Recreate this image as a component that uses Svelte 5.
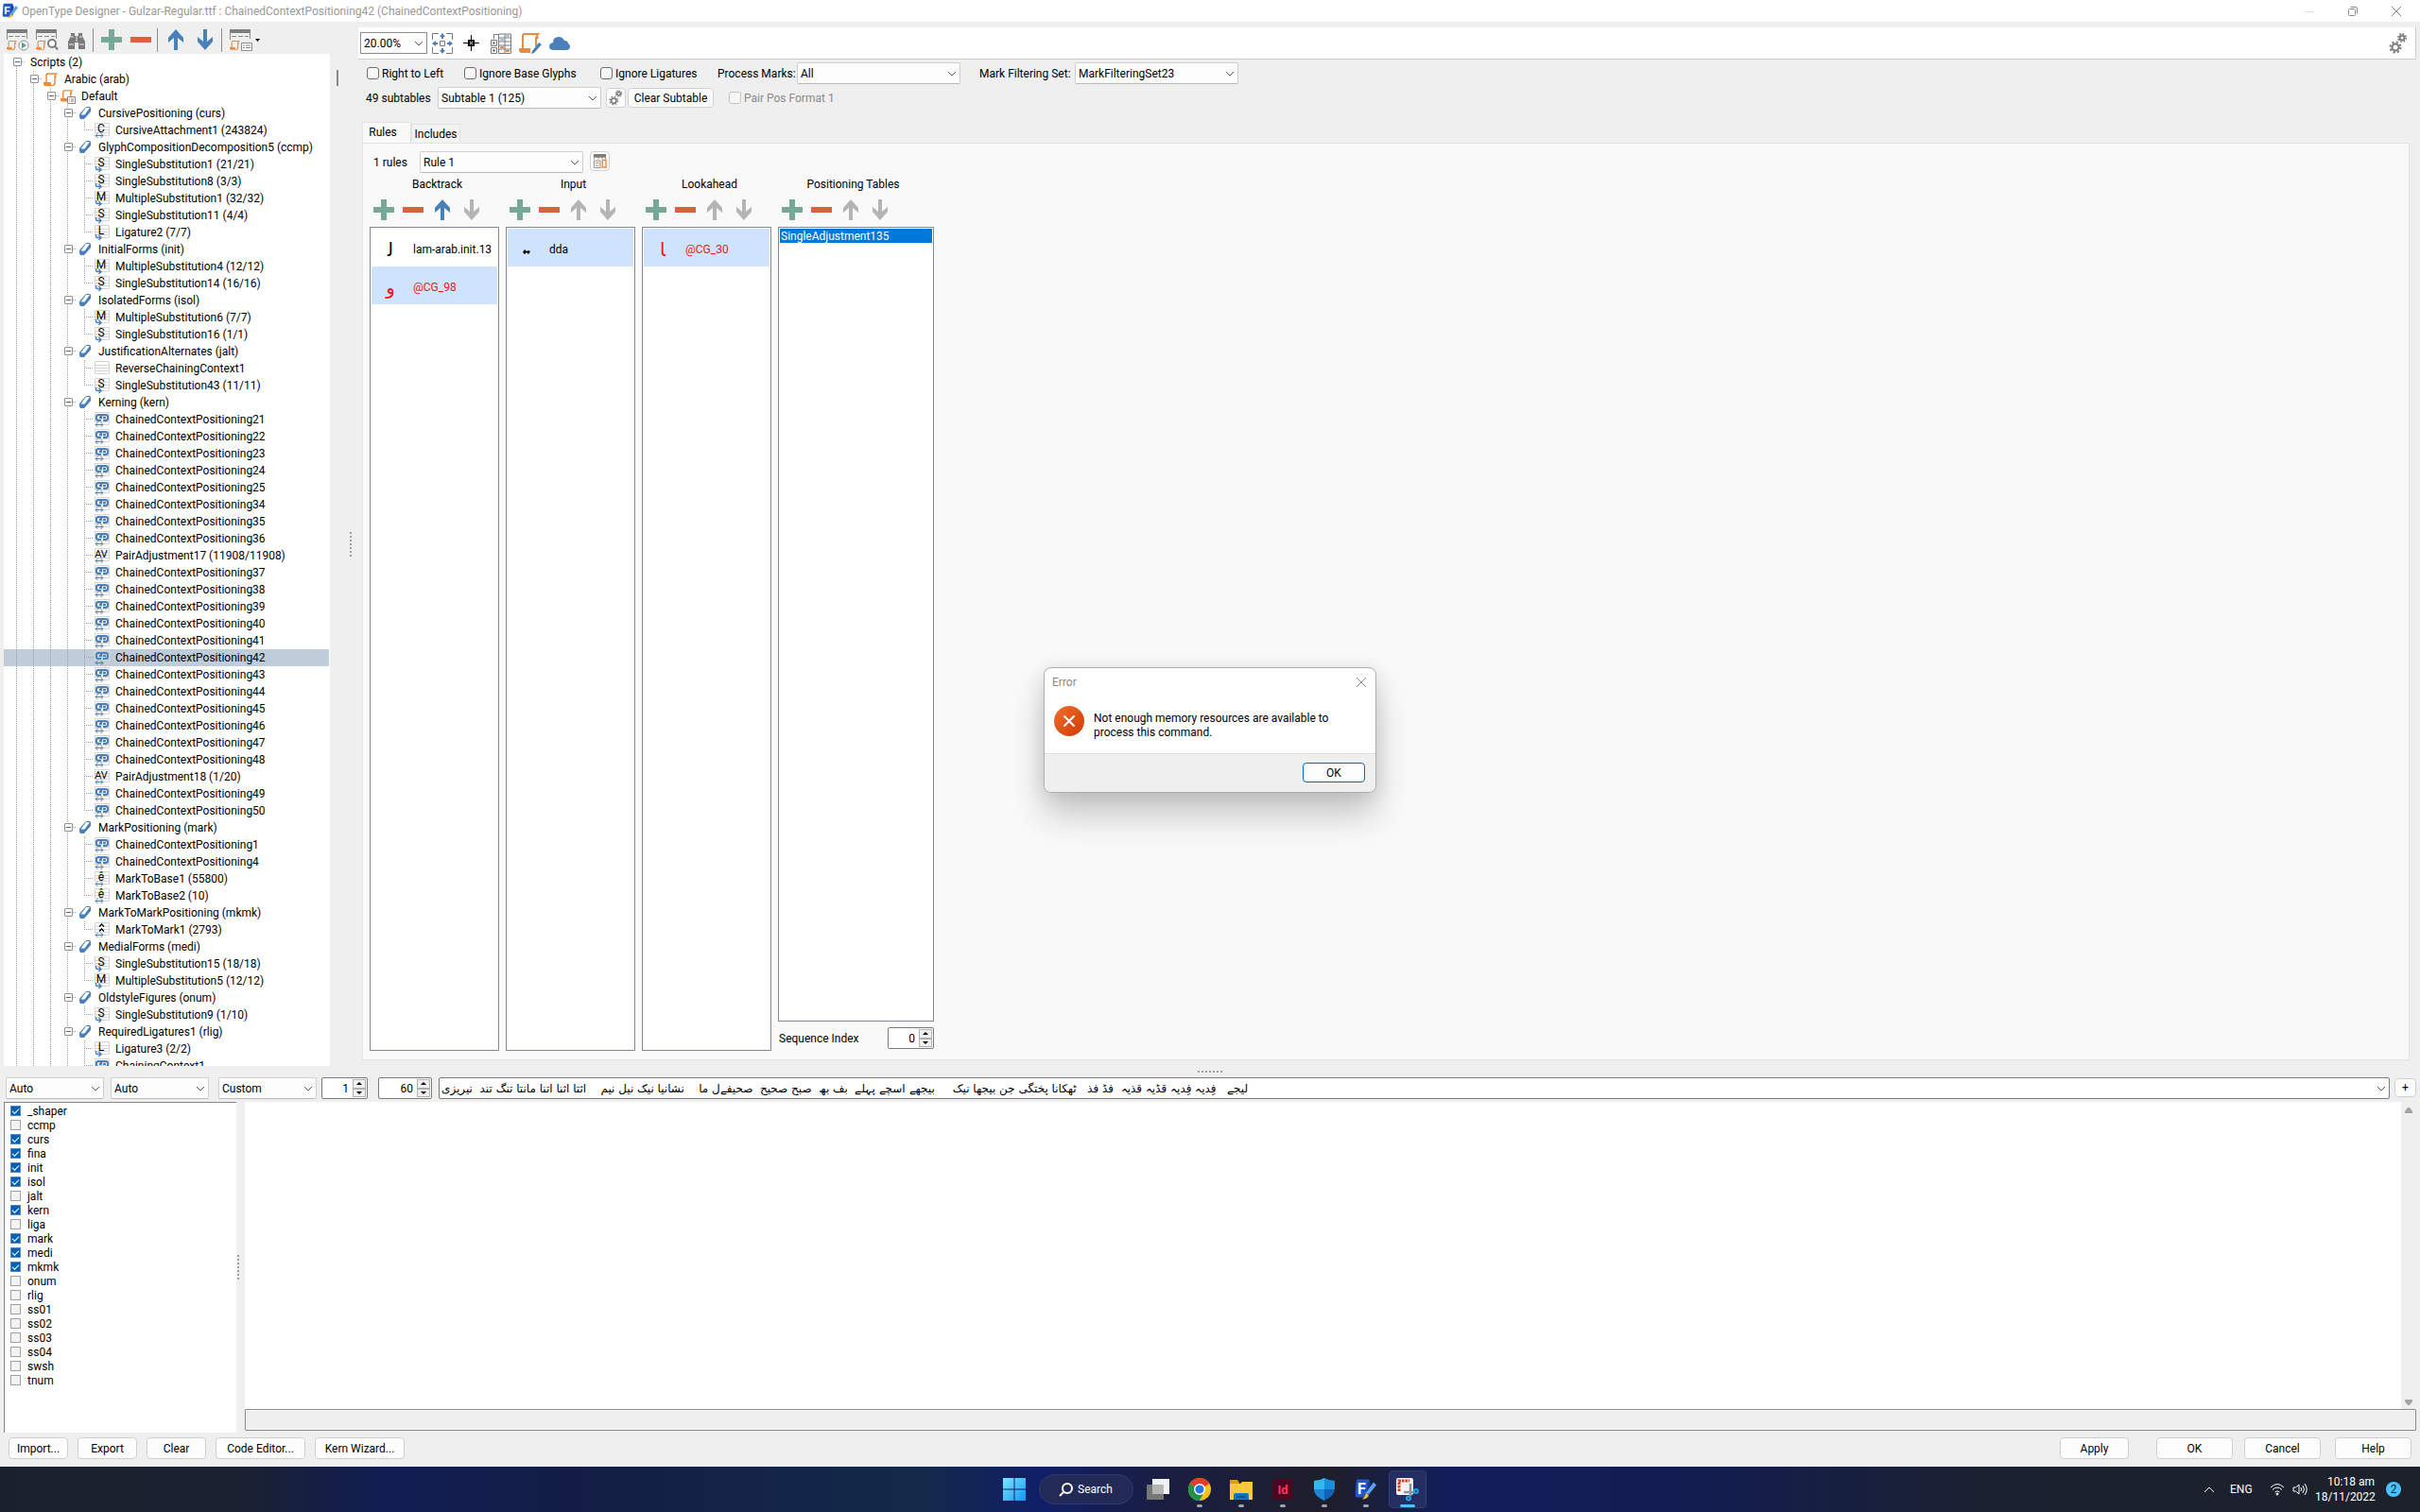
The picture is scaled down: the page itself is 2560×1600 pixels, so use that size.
<script>
	const kern = [21, 22, 23, 24, 25, 34, 35, 36];
	const kern2 = [37, 38, 39, 40, 41, 42, 43, 44, 45, 46, 47, 48];
	const chain = (n) => ["chain", `ChainedContextPositioning${n}`];

	const features = [
		["CursivePositioning (curs)", [["C", "CursiveAttachment1 (243824)", "pos"]]],
		[
			"GlyphCompositionDecomposition5 (ccmp)",
			[
				["S", "SingleSubstitution1 (21/21)"],
				["S", "SingleSubstitution8 (3/3)"],
				["M", "MultipleSubstitution1 (32/32)"],
				["S", "SingleSubstitution11 (4/4)"],
				["L", "Ligature2 (7/7)"],
			],
		],
		["InitialForms (init)", [["M", "MultipleSubstitution4 (12/12)"], ["S", "SingleSubstitution14 (16/16)"]]],
		["IsolatedForms (isol)", [["M", "MultipleSubstitution6 (7/7)"], ["S", "SingleSubstitution16 (1/1)"]]],
		["JustificationAlternates (jalt)", [["", "ReverseChainingContext1"], ["S", "SingleSubstitution43 (11/11)"]]],
		[
			"Kerning (kern)",
			[
				...kern.map(chain),
				["AV", "PairAdjustment17 (11908/11908)", "pos"],
				...kern2.map(chain),
				["AV", "PairAdjustment18 (1/20)", "pos"],
				chain(49),
				chain(50),
			],
		],
		[
			"MarkPositioning (mark)",
			[chain(1), chain(4), ["ê", "MarkToBase1 (55800)", "pos"], ["ê", "MarkToBase2 (10)", "pos"]],
		],
		["MarkToMarkPositioning (mkmk)", [["mark", "MarkToMark1 (2793)", "pos"]]],
		["MedialForms (medi)", [["S", "SingleSubstitution15 (18/18)"], ["M", "MultipleSubstitution5 (12/12)"]]],
		["OldstyleFigures (onum)", [["S", "SingleSubstitution9 (1/10)"]]],
		["RequiredLigatures1 (rlig)", [["L", "Ligature3 (2/2)"], ["chain", "ChainingContext1"]]],
	];

	// flatten to one list of rows
	const rows = [
		{ depth: 0, open: true, text: "Scripts (2)" },
		{ depth: 1, open: true, icon: "script", text: "Arabic (arab)" },
		{ depth: 2, open: true, icon: "lang", text: "Default" },
	];
	for (const [name, lookups] of features) {
		rows.push({ depth: 3, open: true, icon: "tag", text: name });
		lookups.forEach(([letter, text, kind], i) => {
			rows.push({
				depth: 4,
				icon: "lookup",
				letter,
				kind: letter == "chain" ? "pos" : kind,
				text,
				last: i == lookups.length - 1,
			});
		});
	}
	const selected = "ChainedContextPositioning42";

	const on = ["_shaper", "curs", "fina", "init", "isol", "kern", "mark", "medi", "mkmk"];
	const tags = "_shaper ccmp curs fina init isol jalt kern liga mark medi mkmk onum rlig ss01 ss02 ss03 ss04 swsh tnum".split(" ");

	const columns = [
		{ title: "Backtrack", up: true, items: [{ glyph: "ﻟ", name: "lam-arab.init.13" }, { glyph: "و", name: "@CG_98", group: true, sel: true }] },
		{ title: "Input", items: [{ dots: true, name: "dda", sel: true }] },
		{ title: "Lookahead", items: [{ glyph: "ﺎ", name: "@CG_30", group: true, sel: true }] },
		{ title: "Positioning Tables", tables: ["SingleAdjustment135"] },
	];

	const sample =
		"لیجے   فِدیہ فِدیہ قڈیہ قذیہ  فڈ فذ   ٹھکانا پختگی جن بیجھا نیک     بیجھے اسچے پہلے  بف بھ  صبح صحیح  صحیفےل ما    نشانیا نیک نیل نیم    اثتا اثنا اتنا مانتا تنگ تند  نیریزی";
</script>

{#snippet combo(label, value)}
	<span class="combo">
		<select aria-label={label}><option>{value}</option></select>
		<svg viewBox="0 0 10 6"><path d="M1 1l4 4 4-4" fill="none" stroke="#5c5c5c" /></svg>
	</span>
{/snippet}

{#snippet spinner(label, value)}
	<span class="spinner">
		<input type="number" aria-label={label} {value} />
		<span class="steps">
			<button aria-label="Increase"><svg viewBox="0 0 6 3"><path d="M0 3l3-3 3 3z" /></svg></button>
			<button aria-label="Decrease"><svg viewBox="0 0 6 3"><path d="M0 0l3 3 3-3z" /></svg></button>
		</span>
	</span>
{/snippet}

{#snippet plus()}
	<svg class="i22" viewBox="0 0 22 22"><path d="M8 0h6v8h8v6h-8v8H8v-8H0V8h8z" fill="#76a797" /></svg>
{/snippet}
{#snippet minus()}
	<svg class="i22" viewBox="0 0 22 22"><path d="M0 8h22v6H0z" fill="#d9623f" /></svg>
{/snippet}
{#snippet arrow(down, color)}
	<svg class="i22" class:down viewBox="0 0 22 22"><path d="M11 0l8 9v5l-6-5v13H9V9l-6 5V9z" fill={color} /></svg>
{/snippet}

{#snippet scroll()}
	<path d="M4 2h9.500q-2 2 0 4" fill="none" stroke="#e58c41" stroke-width="1.500" />
	<path d="M3 11V4q0-2 2-2M12 4v8q0 2-2 2" fill="none" stroke="#e58c41" stroke-width="1.500" />
	<path d="M0 11h8v3h3v1H2q-2 0-2-2z" fill="#e58c41" />
{/snippet}

{#snippet gears()}
	<g fill="none" stroke="#7a7a7a">
		<circle cx="7" cy="15" r="3.500" stroke-width="2" />
		<circle cx="7" cy="15" r="5.500" stroke-width="2" stroke-dasharray="2.200 2.120" />
		<circle cx="14" cy="5" r="2.500" stroke-width="2" />
		<circle cx="14" cy="5" r="4.300" stroke-width="1.500" stroke-dasharray="1.700 1.680" />
	</g>
{/snippet}

{#snippet tablePage()}
	<path d="M0 0h22v4H0z" fill="#7d7d7d" />
	<path d="M.5 4v7M21.500 4v6M2 7.500h5m2 0h5m2 0h4" stroke="#8a8a8a" fill="none" />
	<g transform="translate(0 11) scale(.72)">{@render scroll()}</g>
{/snippet}

{#snippet fontApp()}
	<rect x="1" y="1" width="14" height="19" rx="2" fill="#2358c9" transform="skewX(-4) translate(1 0)" />
	<path d="M14 3l3 2-2 14-3 1z" fill="#123d99" />
	<text x="3" y="16" font-size="16" font-weight="700" fill="#fff">F</text>
	<path d="M20 4l3 3-8 10-3-2z" fill="#5aa2ea" />
	<path d="M12 15l3 3q-2 4-7 4 3-2 4-7z" fill="#f0bd36" />
{/snippet}

<div class="screen">
	<header class="title">
		<svg class="app" viewBox="0 0 24 23">{@render fontApp()}</svg>
		<h1>OpenType Designer - Gulzar-Regular.ttf : ChainedContextPositioning42 (ChainedContextPositioning)</h1>
		<button class="win" aria-label="Minimize"><svg viewBox="0 0 10 10"><path d="M0 5.500h10" stroke="#ddd" /></svg></button>
		<button class="win" aria-label="Restore">
			<svg viewBox="0 0 10 10" fill="none" stroke="#888"><rect x=".5" y="2.500" width="7" height="7" rx="1" /><path d="M2.500.5H8q1.500 0 1.500 1.500v5.500" /></svg>
		</button>
		<button class="win" aria-label="Close"><svg viewBox="0 0 10 10"><path d="M0 0l10 10M10 0L0 10" stroke="#888" /></svg></button>
	</header>

	<div class="upper">
		<aside>
			<div class="tools">
				<button aria-label="Test lookup">
					<svg class="i24" viewBox="0 0 24 22">
						{@render tablePage()}
						<circle cx="18" cy="17" r="5" fill="#fff" stroke="#8a8a8a" /><path d="M16 13.500v7l5-3.500z" fill="#5f9c87" />
					</svg>
				</button>
				<button aria-label="Find lookup">
					<svg class="i24" viewBox="0 0 24 22">
						{@render tablePage()}
						<circle cx="17" cy="15" r="4" fill="#fff" stroke="#7d7d7d" stroke-width="2" /><path d="M20 18l3 3.500" stroke="#7d7d7d" stroke-width="2" />
					</svg>
				</button>
				<button class="binoc" aria-label="Find">
					<svg class="i22" viewBox="0 0 22 22" fill="#7a7a7a">
						<path d="M5 4h4v3h4V4h4v3l3 6v8h-7v-7h-4v7H2v-8l3-6z" />
						<path d="M3 16h5M14 16h5M5 8h3M14 8h3M11 7v6" stroke="#efefef" />
					</svg>
				</button>
				<i class="sep"></i>
				<button aria-label="Add">{@render plus()}</button>
				<button aria-label="Remove">{@render minus()}</button>
				<i class="sep"></i>
				<button aria-label="Move up">{@render arrow(false, "#4a80b8")}</button>
				<button aria-label="Move down">{@render arrow(true, "#4a80b8")}</button>
				<i class="sep"></i>
				<button class="more" aria-label="View">
					<svg class="i24" viewBox="0 0 24 22">
						{@render tablePage()}
						<path d="M12.500 14.500h11v8h-11z" fill="#fff" stroke="#8a8a8a" /><path d="M14 17h2m1 0h5M14 19.500h2m1 0h5" stroke="#8a8a8a" />
					</svg>
					<svg class="caret" viewBox="0 0 5 3"><path d="M0 0h5L2.500 3z" /></svg>
				</button>
			</div>
			<ul class="tree">
				{#each rows as row}
					<li class:selected={row.text == selected}>
						{#each { length: row.depth } as _}<i class="guide"></i>{/each}
						<i class="node" class:root={row.depth == 0} class:last={row.last}>
							{#if row.open}<b></b>{/if}
						</i>
						{#if row.icon == "script"}
							<svg class="icon" viewBox="0 0 16 16">{@render scroll()}</svg>
						{:else if row.icon == "lang"}
							<svg class="icon" viewBox="0 0 16 16">
								<g transform="scale(.9)">{@render scroll()}</g>
								<path d="M7.500 8.500h8v7h-8z" fill="#fff" stroke="#888" /><path d="M9 11h1m1 0h3M9 13h1m1 0h3" stroke="#777" />
							</svg>
						{:else if row.icon == "tag"}
							<svg class="icon" viewBox="0 0 16 16">
								<path d="M8 2q1-1 2-1h3l1 1v4L7 14H3l-1-2V9z" fill="#4a80b8" />
								<path d="M9 2h4L7.500 9.500H3.500z" fill="#fff" />
							</svg>
						{:else if row.icon == "lookup"}
							<svg class="icon lookup" viewBox="0 0 16 18">
								<path d="M.5 1.500h15v13H.5zM1 5.500h14M1 8.500h14M1 11.500h14" fill="none" stroke="#d4d4d4" />
								{#if row.letter == "chain"}
									<path d="M7 10H4q-2 0-2-2V6q0-2 2-2h3v3H5M9 10h3q2 0 2-2V6q0-2-2-2H8M9 7h3" fill="none" stroke="#4a80b8" stroke-width="2" />
								{:else if row.letter == "mark"}
									<path d="M5 5.500L7.500 3 10 5.500M5 10.500L7.500 8 10 10.500" fill="none" stroke="#000" stroke-width="1.300" />
								{:else}
									<text x="7" y="11" font-size={row.letter == "AV" ? 11 : 12} text-anchor="middle">{row.letter}</text>
								{/if}
								{#if row.kind == "pos"}
									<path d="M0 12h10v6H0z" fill="#fff" class="patch" />
									<path d="M1 14.500h8M3.500 12L1 14.500 3.500 17M6.500 12L9 14.500 6.500 17" fill="none" stroke="#4a80b8" />
								{:else if row.letter}
									<path d="M0 12h8v6H0z" fill="#fff" />
									<path d="M1.500 11v2q0 1.500 2 1.500h3M4.500 12L7 14.500 4.500 17" fill="none" stroke="#4a80b8" stroke-width="1.400" />
								{/if}
							</svg>
						{/if}
						<span>{row.text}</span>
					</li>
				{/each}
			</ul>
		</aside>
		<div class="vsplit"><i class="mark"></i><i class="grip"></i></div>

		<main>
			<div class="bar">
				<div class="zoom">{@render combo("Zoom", "20.00%")}</div>
				<button aria-label="Fit">
					<svg class="i22" viewBox="0 0 22 22" fill="none" stroke="#7a7a7a">
						<path d="M.5 7V.5H7M15 .5h6.500V7M21.500 15v6.500H15M7 21.500H.5V15M9 8.500h4.500v5H8.500v-5z" />
						<path d="M11 0l3 4h-2v2h-2V4H8zM11 22l3-4h-2v-2h-2v2H8zM0 11l4-3v2h2v2H4v2zM22 11l-4-3v2h-2v2h2v2z" fill="#4a80b8" stroke="none" />
					</svg>
				</button>
				<button aria-label="Center">
					<svg class="i22" viewBox="0 0 22 22"><path d="M10.500 2v17M2 10.500h17" stroke="#000" /><path d="M7 7h7v7H7z" /><path d="M9 9l3 3m0-3l-3 3" stroke="#fff" /></svg>
				</button>
				<button aria-label="Grid">
					<svg class="i22" viewBox="0 0 22 22" fill="none" stroke="#7a7a7a">
						<path d="M8.500 1h13v20.500h-13zM15 1v20M9 5h12M9 9h12M9 13h12M9 17h12M3 1.500h5M3.500 1v5M.5 7.500h6v6h-6zM.5 15.500h6v6h-6zM2 10.500h3M3.500 9v3M2 18.500h3M3.500 17v3" />
						<path d="M10 7h4M16 3h4" stroke="#4a80b8" /><path d="M10 15h4M16 19h4" stroke="#e58c41" stroke-width="2" />
					</svg>
				</button>
				<button aria-label="Script">
					<svg class="i24" viewBox="0 0 24 22">
						<path d="M4 16V3q0-2 2-2h14q-2 2 0 5M18 4v10" fill="none" stroke="#e58c41" stroke-width="2" /><path d="M0 16h12v5H3q-3 0-3-3z" fill="#e58c41" />
						<path d="M21 10l3 2-8 9-3 1 1-3z" fill="#4a80b8" />
					</svg>
				</button>
				<button aria-label="Cloud">
					<svg class="i22" viewBox="0 0 22 22"><path d="M5 18q-5 0-5-4 0-3 4-4 0-6 6-6 4 0 6 4 4 0 4 3 2 1 2 3 0 4-4 4z" fill="#4a80b8" /></svg>
				</button>
				<button class="settings" aria-label="Settings"><svg class="i22" viewBox="0 0 20 22">{@render gears()}</svg></button>
			</div>
			<div class="opts">
				<label class="check"><input type="checkbox" />Right to Left</label>
				<label class="check"><input type="checkbox" />Ignore Base Glyphs</label>
				<label class="check"><input type="checkbox" />Ignore Ligatures</label>
				<span>Process Marks:</span>
				<div class="wide">{@render combo("Process Marks", "All")}</div>
				<span>Mark Filtering Set:</span>
				<div class="wide">{@render combo("Mark Filtering Set", "MarkFilteringSet23")}</div>
			</div>
			<div class="sub">
				<span class="count">49 subtables</span>
				<div class="wide">{@render combo("Subtable", "Subtable 1 (125)")}</div>
				<button class="btn sq" aria-label="Subtable settings"><svg viewBox="0 0 20 22">{@render gears()}</svg></button>
				<button class="btn clear">Clear Subtable</button>
				<label class="check off"><input type="checkbox" disabled />Pair Pos Format 1</label>
			</div>
			<div class="tabs" role="tablist">
				<button role="tab" class="tab active" aria-selected="true">Rules</button>
				<button role="tab" class="tab" aria-selected="false">Includes</button>
			</div>
			<section class="panel">
				<div class="rule">
					<span class="rules">1 rules</span>
					<div class="wide">{@render combo("Rule", "Rule 1")}</div>
					<button class="btn sq" aria-label="Rule table">
						<svg viewBox="0 0 16 18"><path d="M1 1h14v4H1z" fill="#7d7d7d" /><path d="M1.500 8.500h7v8h-7zM3 11h4M3 14h4M1.500 5v2m5-2v2m4-2v2m4-2v2" fill="none" stroke="#8a8a8a" /><path d="M11 15V8h4v8h-5" fill="none" stroke="#e58c41" stroke-width="1.500" /></svg>
					</button>
				</div>
				<div class="cols">
					{#each columns as col}
						<div class="col" class:last={col.tables}>
							<h2>{col.title}</h2>
							<div class="acts">
								<button aria-label="Add to {col.title}">{@render plus()}</button>
								<button aria-label="Remove from {col.title}">{@render minus()}</button>
								<button aria-label="Move up">{@render arrow(false, col.up ? "#4a80b8" : "#b4b4b4")}</button>
								<button aria-label="Move down">{@render arrow(true, "#b4b4b4")}</button>
							</div>
							<ul class="list">
								{#if col.tables}
									{#each col.tables as t}<li class="table">{t}</li>{/each}
								{:else}
									{#each col.items as item}
										<li class="glyph" class:sel={item.sel} class:group={item.group}>
											<span class="pic">
												{#if item.dots}
													<svg viewBox="0 0 8 5"><path d="M2 0l2 2 2-1 2 1-2 3-2-2-2 2-2-2z" /></svg>
												{:else}{item.glyph}{/if}
											</span>
											{item.name}
										</li>
									{/each}
								{/if}
							</ul>
							{#if col.tables}
								<div class="seq"><span>Sequence Index</span><div class="n49">{@render spinner("Sequence Index", 0)}</div></div>
							{/if}
						</div>
					{/each}
				</div>
			</section>
		</main>
	</div>

	<div class="hsplit"><i class="grip"></i></div>

	<div class="preview">
		<div class="c104">{@render combo("Script", "Auto")}</div>
		<div class="c104 mid">{@render combo("Language", "Auto")}</div>
		<div class="c104">{@render combo("Direction", "Custom")}</div>
		<div class="n49">{@render spinner("Line", 1)}</div>
		<div class="n57">{@render spinner("Size", 60)}</div>
		<div class="sample">
			<input type="text" aria-label="Sample text" value={sample} />
			<svg viewBox="0 0 10 6"><path d="M1 1l4 4 4-4" fill="none" stroke="#5c5c5c" /></svg>
		</div>
		<button class="btn add">+</button>
	</div>

	<div class="lower">
		<div class="tags">
			{#each tags as tag}
				<label><input type="checkbox" checked={on.includes(tag)} />{tag}</label>
			{/each}
		</div>
		<div class="vsplit thin"><i class="grip"></i></div>
		<div class="canvas">
			<div class="paper">
				<div class="scrollbar">
					<svg viewBox="0 0 8 6"><path d="M3 0h2l3 4v2H0V4z" fill="#a3a3a3" /></svg>
					<svg viewBox="0 0 8 6"><path d="M0 0h8v2L5 6H3L0 2z" fill="#a3a3a3" /></svg>
				</div>
			</div>
			<div class="status"></div>
		</div>
	</div>

	<footer>
		<button class="btn w63">Import...</button>
		<button class="btn w63">Export</button>
		<button class="btn w63">Clear</button>
		<button class="btn w95">Code Editor...</button>
		<button class="btn w95">Kern Wizard...</button>
		<span class="fill"></span>
		<button class="btn w73">Apply</button>
		<button class="btn w81 ok">OK</button>
		<button class="btn w81">Cancel</button>
		<button class="btn w81 help">Help</button>
	</footer>

	<nav class="taskbar">
		<div class="apps">
			<button aria-label="Start">
				<svg class="i24" viewBox="0 0 24 24">
					<linearGradient id="win" x1="0" y1="0" x2="1" y2="1"><stop offset="0" stop-color="#7be8ff" /><stop offset="1" stop-color="#1494f5" /></linearGradient>
					<path d="M0 0h11.500v11.500H0zM12.500 0H24v11.500H12.500zM0 12.500h11.500V24H0zM12.500 12.500H24V24H12.500z" fill="url(#win)" />
				</svg>
			</button>
			<button class="search">
				<svg viewBox="0 0 14 14" fill="none" stroke="#fff" stroke-width="2"><circle cx="8" cy="6" r="5" /><path d="M4 10l-4 4" /></svg>Search
			</button>
			<button aria-label="Task view">
				<svg class="i24" viewBox="0 0 24 24"><path d="M6 1h18v16H6z" fill="#f2f2f2" /><path d="M0 7h18v16H0z" fill="#777" /><path d="M6 7h12v10H6z" fill="#b5b5b5" /></svg>
			</button>
			<button class="run" aria-label="Chrome">
				<svg class="i24" viewBox="0 0 24 24">
					<circle cx="12" cy="12" r="12" fill="#fbc116" />
					<path d="M12 12L1.600 6A12 12 0 0 1 22.400 6z" fill="#e33b2e" />
					<path d="M12 24A12 12 0 0 1 1.600 6L12 12l4 4z" fill="#229342" />
					<circle cx="12" cy="12" r="6" fill="#fff" /><circle cx="12" cy="12" r="4.600" fill="#2f76e5" />
				</svg>
			</button>
			<button class="run" aria-label="File Explorer">
				<svg class="i24" viewBox="0 0 24 24"><path d="M0 2h8l2 3v4H0z" fill="#e09a08" /><path d="M0 6h11l2-2h11v19H0z" fill="#fdc93c" /><path d="M4 18q0-2 2-2h12q2 0 2 2v5H4z" fill="#1474c4" /><path d="M7 19h10v2H7z" fill="#0a5298" /></svg>
			</button>
			<button class="run" aria-label="InDesign">
				<svg class="i24" viewBox="0 0 24 24"><rect x="1" y="1" width="22" height="22" rx="4" fill="#4b0620" /><text x="12" y="17" font-size="13" font-weight="700" text-anchor="middle" fill="#ff3568">Id</text></svg>
			</button>
			<button class="run" aria-label="Security">
				<svg class="i24" viewBox="0 0 24 24">
					<path d="M12 0q5 3 11 3v8q0 8-11 13Q1 19 1 11V3q6 0 11-3z" fill="#0f63b5" /><path d="M12 0v12H1V3q6 0 11-3z" fill="#36b6ee" /><path d="M12 0q5 3 11 3v9H12z" fill="#1590dd" /><path d="M12 12v12Q1 19 1 12z" fill="#1e86d6" />
				</svg>
			</button>
			<button class="run" aria-label="FontCreator"><svg class="i24" viewBox="0 0 24 23">{@render fontApp()}</svg></button>
			<button class="run current" aria-label="Snipping Tool">
				<svg class="i24" viewBox="0 0 24 24">
					<rect x="0" y="0" width="18" height="18" rx="2" fill="#f4f4f4" /><path d="M3 14V3h11" fill="none" stroke="#d83b17" stroke-width="3" stroke-dasharray="2.500 1" />
					<path d="M15 6v13M8 15h12" stroke="#8d9499" stroke-width="2.500" /><circle cx="21" cy="14" r="2" fill="none" stroke="#1ca0e8" stroke-width="2" /><circle cx="13" cy="21.500" r="2" fill="none" stroke="#1ca0e8" stroke-width="2" />
				</svg>
			</button>
		</div>
		<div class="tray">
			<svg class="up" viewBox="0 0 12 8"><path d="M1 7l5-5 5 5" /></svg>
			<span class="lang">ENG</span>
			<svg class="net" viewBox="0 0 16 14"><path d="M1 5q7-7 14 0M3 7.500q5-5 10 0M5.500 10q2.500-2.500 5 0" /><circle cx="8" cy="12" r="1" fill="#fff" /></svg>
			<svg class="vol" viewBox="0 0 16 14"><path d="M1 5h2.500L7 2v10L3.500 9H1zM9 5q1.500 2 0 4M11 3q3 4 0 8M13 1q4.500 6 0 12" /></svg>
			<time>10:18 am<br />18/11/2022</time>
			<span class="badge">2</span>
		</div>
	</nav>

	<div class="dialog" role="alertdialog" aria-labelledby="err">
		<div class="dtitle">
			<span id="err">Error</span>
			<button aria-label="Close"><svg viewBox="0 0 10 10"><path d="M0 0l10 10M10 0L0 10" stroke="#888" /></svg></button>
		</div>
		<div class="dbody">
			<svg viewBox="0 0 32 32">
				<linearGradient id="red" x1="0" y1="0" x2="1" y2="1"><stop offset="0" stop-color="#f1702c" /><stop offset="1" stop-color="#cf3a05" /></linearGradient>
				<circle cx="16" cy="16" r="16" fill="url(#red)" /><path d="M11 11l10 10M21 11L11 21" stroke="#fff" stroke-width="2" stroke-linecap="round" />
			</svg>
			<p>Not enough memory resources are available to process this command.</p>
		</div>
		<div class="dfoot"><button class="btn">OK</button></div>
	</div>
</div>

<style>
	:global(body) {
		background: #efefef;
	}

	.screen {
		position: relative;
		display: flex;
		flex-direction: column;
		height: 100vh;
		overflow: hidden;
		background: #efefef;
		color: #000;
		font: 12px/16px Roboto, "Noto Sans", "DejaVu Sans", sans-serif;
	}

	.screen * {
		box-sizing: border-box;
	}

	svg {
		display: block;
		flex: none;
		overflow: visible;
	}

	button,
	select,
	input {
		font: inherit;
		color: inherit;
		margin: 0;
	}

	button {
		display: flex;
		align-items: center;
		justify-content: center;
		padding: 0;
		border: 0;
		background: none;
	}

	ul {
		margin: 0;
		padding: 0;
		list-style: none;
	}

	.i22 {
		width: 22px;
		height: 22px;
	}

	.i24 {
		width: 24px;
		height: 24px;
	}

	.down {
		transform: rotate(180deg);
	}

	/* title bar */
	.title {
		display: flex;
		flex: none;
		align-items: center;
		height: 23px;
		padding-right: 2px;
		background: #fff;
	}

	.app {
		width: 18px;
		height: 17px;
		margin: 0 3px 0 2px;
	}

	h1 {
		flex: 1;
		margin: 0;
		font-size: 12px;
		font-weight: 400;
		color: #999;
	}

	.win {
		width: 46px;
		height: 20px;
	}

	.win svg {
		width: 10px;
		height: 10px;
	}

	/* upper half */
	.upper {
		display: flex;
		flex: 1;
		min-height: 0;
	}

	aside {
		display: flex;
		flex-direction: column;
		width: 349px;
		padding-left: 4px;
	}

	.tools {
		display: flex;
		flex: none;
		align-items: center;
		height: 34px;
		margin-left: -1px;
		padding-top: 4px;
	}

	.tools button {
		width: 31px;
	}

	.tools .i24 {
		height: 22px;
	}

	.tools .more {
		width: 42px;
		gap: 3px;
	}

	.caret {
		width: 5px;
		height: 3px;
	}

	.sep {
		width: 1px;
		height: 25px;
		margin: 0 3px 0 2px;
		background: #8c8c8c;
	}

	.tree {
		flex: 1;
		min-height: 0;
		overflow: hidden;
		background: #fff;
	}

	.tree li {
		display: flex;
		height: 18px;
		margin-right: 1px;
		padding-left: 4px;
		line-height: 18px;
		white-space: nowrap;
	}

	.tree li.selected {
		background: #bfccda;
	}

	.selected .patch {
		fill: #bfccda;
	}

	.guide,
	.node {
		flex: none;
		width: 18px;
		height: 18px;
		--v: repeating-linear-gradient(#a0a0a0 0 1px, transparent 1px 2px);
		--h: repeating-linear-gradient(90deg, #a0a0a0 0 1px, transparent 1px 2px);
		background: var(--v) 9px 0 / 1px 18px no-repeat;
	}

	.node {
		padding: 4px 0 0 6px;
		background:
			var(--v) 9px 0 / 1px 18px no-repeat,
			var(--h) 9px 8px / 11px 1px no-repeat;
	}

	.node.root {
		background:
			var(--v) 9px 9px / 1px 9px no-repeat,
			var(--h) 9px 8px / 11px 1px no-repeat;
	}

	.node.last {
		background:
			var(--v) 9px 0 / 1px 9px no-repeat,
			var(--h) 9px 8px / 11px 1px no-repeat;
	}

	.node b {
		display: block;
		width: 9px;
		height: 9px;
		border: 1px solid #919191;
		border-radius: 1px;
		background: linear-gradient(#4b63a7, #4b63a7) 1px 3px / 5px 1px no-repeat #fafafa;
	}

	.icon {
		width: 16px;
		height: 16px;
		margin: 1px 0 0 2px;
	}

	.icon.lookup {
		height: 18px;
		margin-top: 0;
	}

	.tree span {
		padding-left: 6px;
	}

	.vsplit {
		display: flex;
		flex: none;
		position: relative;
		align-items: center;
		justify-content: flex-end;
		width: 30px;
		padding-right: 7px;
	}

	.mark {
		position: absolute;
		left: 7px;
		top: 51px;
		width: 2px;
		height: 17px;
		background: #888;
	}

	.grip {
		width: 2px;
		height: 26px;
		background: repeating-linear-gradient(#a0a0a0 0 2px, transparent 2px 4px);
	}

	.vsplit.thin {
		justify-content: center;
		width: 9px;
		padding: 0 5px 0 0;
	}

	.hsplit {
		display: flex;
		flex: none;
		align-items: center;
		justify-content: center;
		height: 12px;
	}

	.hsplit .grip {
		width: 26px;
		height: 2px;
		background: repeating-linear-gradient(90deg, #a0a0a0 0 2px, transparent 2px 4px);
	}

	main {
		display: flex;
		flex: 1;
		flex-direction: column;
		min-width: 0;
		padding: 6px 4px 6px 0;
	}

	/* form parts */
	.combo {
		position: relative;
		display: block;
	}

	.combo select {
		display: block;
		width: 100%;
		height: 23px;
		padding: 0 18px 0 3px;
		border: 1px solid #cfcfcf;
		border-bottom-color: #b8b8b8;
		border-radius: 2px;
		background: #fdfdfd;
		appearance: none;
	}

	.combo svg,
	.sample svg {
		position: absolute;
		right: 4px;
		top: 9px;
		width: 10px;
		height: 6px;
		pointer-events: none;
	}

	.zoom .combo select {
		border-color: #8c8c8c;
		border-radius: 0;
	}

	.btn {
		height: 23px;
		border: 1px solid #d0d0d0;
		border-radius: 4px;
		background: #fdfdfd;
	}

	.check {
		display: flex;
		align-items: center;
		gap: 3px;
	}

	.check input {
		width: 13px;
		height: 13px;
		border: 1px solid #6e6e6e;
		border-radius: 3px;
		background: #f7f7f7;
		appearance: none;
	}

	.check.off {
		color: #8a8a8a;
	}

	.check.off input {
		border-color: #c4c4c4;
	}

	.spinner {
		display: flex;
		height: 23px;
		padding: 1px;
		border: 1px solid #7a7a7a;
		border-radius: 2px;
		background: #fff;
	}

	.spinner input {
		flex: 1;
		width: 0;
		padding: 0 4px 0 0;
		border: 0;
		background: none;
		text-align: right;
		appearance: textfield;
	}

	.spinner input::-webkit-inner-spin-button {
		display: none;
	}

	.steps {
		display: grid;
		width: 14px;
	}

	.steps button {
		border: 1px solid #b0b0b0;
		background: #f0f0f0;
	}

	.steps svg {
		width: 6px;
		height: 3px;
	}

	/* right pane */
	.bar {
		display: flex;
		flex: none;
		align-items: center;
		height: 34px;
		border: solid #ccc;
		border-width: 0 1px 1px 0;
		padding: 0 7px 0 2px;
		background: #fff;
	}

	.zoom {
		width: 71px;
	}

	.bar button {
		width: 31px;
	}

	.bar .settings {
		width: 22px;
		margin-left: auto;
	}

	.opts {
		display: grid;
		flex: none;
		grid-template-columns: 103px 144px 124px 84px 193px 101px 173px;
		align-items: center;
		height: 23px;
		margin: 3px 0;
		padding-left: 9px;
	}

	.wide {
		width: 173px;
	}

	.sub {
		display: flex;
		flex: none;
		align-items: center;
		height: 23px;
		padding-left: 8px;
	}

	.count {
		width: 76px;
	}

	.sq {
		width: 21px;
		height: 21px;
	}

	.sq svg {
		width: 15px;
		height: 17px;
	}

	.sub .sq {
		margin: 0 2px 0 5px;
	}

	.clear {
		width: 91px;
		height: 21px;
		margin-right: 16px;
	}

	.tabs {
		display: flex;
		flex: none;
		align-items: flex-end;
		height: 22px;
		margin: 14px 0 0 4px;
	}

	.tab {
		width: 52px;
		height: 20px;
		border: 1px solid #e3e3e3;
		border-bottom: 0;
		background: #f3f3f3;
	}

	.tab.active {
		height: 22px;
		padding: 0 8px 2px 0;
		background: #f9f9f9;
	}

	.panel {
		display: flex;
		flex: 1;
		flex-direction: column;
		min-height: 0;
		margin: 0 7px 0 4px;
		padding: 8px 7px 9px;
		border: 1px solid #e3e3e3;
		background: #f9f9f9;
	}

	.rule {
		display: flex;
		flex: none;
		align-items: center;
		height: 23px;
		padding-left: 4px;
	}

	.rules {
		width: 49px;
	}

	.rule .btn {
		margin: 0 0 2px 7px;
	}

	.cols {
		display: flex;
		flex: 1;
		gap: 7px;
		min-height: 0;
		padding-top: 4px;
	}

	.col {
		display: flex;
		flex-direction: column;
		width: 137px;
	}

	.col.last {
		width: 165px;
	}

	h2 {
		margin: 0;
		padding-left: 6px;
		font-size: 12px;
		font-weight: 400;
		line-height: 16px;
		text-align: center;
	}

	.col.last h2 {
		padding: 0 6px 0 0;
	}

	.acts {
		display: flex;
		flex: none;
		align-items: center;
		height: 37px;
		margin-left: -1px;
	}

	.acts button {
		width: 31px;
	}

	.list {
		flex: 1;
		padding: 1px;
		border: 1px solid #828790;
		background: #fff;
	}

	.glyph {
		display: flex;
		align-items: center;
		height: 40px;
		padding: 4px 0 0 12px;
	}

	.glyph.sel {
		background: #cfe4fc;
	}

	.glyph.group {
		color: #fb1020;
	}

	.pic {
		display: flex;
		justify-content: center;
		width: 16px;
		margin-right: 16px;
		font: 20px/20px "DejaVu Sans", sans-serif;
	}

	.pic svg {
		width: 8px;
		height: 5px;
		margin-top: 5px;
	}

	.table {
		height: 15px;
		padding-left: 1px;
		background: #0078d7;
		color: #fff;
		line-height: 16px;
	}

	.seq {
		display: flex;
		align-items: center;
		justify-content: space-between;
		margin-top: 6px;
		padding: 0 0 2px 1px;
	}

	.n49 {
		width: 49px;
	}

	/* preview row */
	.preview {
		display: flex;
		flex: none;
		gap: 7px;
		padding: 0 4px 3px 6px;
	}

	.c104 {
		width: 104px;
	}

	.mid {
		margin-right: 3px;
	}

	.preview .n49 {
		margin: 0 4px 0 -2px;
	}

	.n57 {
		width: 57px;
	}

	.sample {
		position: relative;
		flex: 1;
	}

	.sample input {
		display: block;
		width: 100%;
		height: 23px;
		padding: 0 20px 0 2px;
		border: 1px solid #7a7a7a;
		border-radius: 2px;
		background: #fff;
		direction: ltr;
		font: 12px/20px "DejaVu Sans", sans-serif;
	}

	.add {
		width: 23px;
		height: 20px;
		margin: 1px 0 0 -2px;
	}

	/* lower half */
	.lower {
		display: flex;
		flex: none;
		height: 350px;
		padding: 0 4px;
	}

	.tags {
		width: 246px;
		padding-top: 1px;
		border: solid #828790;
		border-width: 1px 0 0 1px;
		background: #fff;
	}

	.tags label {
		display: flex;
		align-items: center;
		gap: 7px;
		height: 15px;
		padding-left: 6px;
	}

	.tags input {
		width: 11px;
		height: 11px;
		border: 1px solid #a0a0a0;
		background: #f3f3f3;
		appearance: none;
	}

	.tags input:checked {
		border-color: #5b87b5;
		background: #005fb8;
	}

	.tags input:checked::before {
		content: "";
		display: block;
		width: 6px;
		height: 3px;
		margin: 2px 0 0 1px;
		border: solid #fff;
		border-width: 0 0 1px 1px;
		transform: rotate(-45deg);
	}

	.canvas {
		display: flex;
		flex: 1;
		flex-direction: column;
		padding-bottom: 2px;
	}

	.paper {
		display: flex;
		flex: 1;
		justify-content: flex-end;
		background: #fff;
	}

	.scrollbar {
		display: flex;
		flex-direction: column;
		align-items: center;
		justify-content: space-between;
		width: 16px;
		padding: 6px 0 4px;
		background: #efefef;
	}

	.scrollbar svg {
		width: 8px;
		height: 6px;
	}

	.status {
		height: 23px;
		border: 1px solid #888;
		border-radius: 1px;
		box-shadow: inset 0 0 0 1px #fafafa;
	}

	footer {
		display: flex;
		flex: none;
		gap: 10px;
		padding: 5px 9px 8px;
	}

	.fill {
		flex: 1;
	}

	.w63 {
		width: 63px;
	}

	.w73 {
		width: 73px;
	}

	.w81 {
		width: 81px;
	}

	.w95 {
		width: 95px;
	}

	.ok {
		margin: 0 2px 0 19px;
	}

	.help {
		margin-left: 5px;
	}

	/* taskbar */
	.taskbar {
		display: flex;
		position: relative;
		flex: none;
		align-items: center;
		justify-content: center;
		height: 48px;
		background: linear-gradient(90deg, #1b212c 0%, #1a2131 10%, #111d52 16%, #131d45 24%, #132a4a 38%, #101f66 43%, #1a1e42 48%, #1e1f2b 55%, #121e5c 60%, #131d50 70%, #1b2130 82%, #1c212b 100%);
		color: #fff;
	}

	.apps {
		display: flex;
		align-items: center;
		gap: 4px;
		padding-left: 2px;
	}

	.apps button {
		position: relative;
		width: 40px;
		height: 40px;
	}

	.apps .search {
		gap: 5px;
		width: 100px;
		height: 32px;
		margin: 0 2px;
		border: 1px solid #30396f;
		border-radius: 16px;
		background: #232a58;
	}

	.search svg {
		width: 14px;
		height: 14px;
	}

	.run::after {
		content: "";
		position: absolute;
		bottom: 1px;
		left: 17px;
		width: 6px;
		height: 3px;
		border-radius: 2px;
		background: #a2a3ab;
	}

	.apps .current {
		border: 1px solid #333c72;
		border-radius: 4px;
		background: #252e60;
	}

	.current::after {
		bottom: 0;
		left: 11px;
		width: 16px;
		background: #4cc2ff;
	}

	.tray {
		display: flex;
		position: absolute;
		right: 20px;
		top: 0;
		align-items: center;
		height: 48px;
	}

	.tray svg {
		fill: none;
		stroke: #fff;
	}

	.up {
		width: 12px;
		height: 8px;
		margin-right: 16px;
	}

	.lang {
		width: 24px;
		margin-right: 18px;
	}

	.net,
	.vol {
		width: 16px;
		height: 14px;
		margin-right: 8px;
	}

	time {
		width: 63px;
		margin-right: 12px;
		text-align: right;
	}

	.badge {
		width: 16px;
		height: 16px;
		border-radius: 8px;
		background: #4cc2ff;
		color: #102030;
		text-align: center;
	}

	/* error box */
	.dialog {
		display: flex;
		position: absolute;
		left: calc(50% - 176px);
		top: calc(50% - 94px);
		flex-direction: column;
		width: 352px;
		overflow: hidden;
		border: 1px solid #adadad;
		border-radius: 8px;
		background: #fff;
		box-shadow: 0 24px 36px rgba(0, 0, 0, 0.2), 0 2px 20px rgba(0, 0, 0, 0.1);
	}

	.dtitle {
		display: flex;
		align-items: center;
		justify-content: space-between;
		height: 30px;
		padding: 0 10px 0 8px;
		color: #8a8a8a;
	}

	.dtitle svg {
		width: 10px;
		height: 10px;
	}

	.dbody {
		display: flex;
		gap: 10px;
		padding: 10px 44px 14px 10px;
	}

	.dbody svg {
		width: 32px;
		height: 32px;
	}

	.dbody p {
		margin: 6px 0 0;
		line-height: 15px;
	}

	.dfoot {
		display: flex;
		justify-content: flex-end;
		padding: 9px 11px 10px;
		border-top: 1px solid #dfdfdf;
		background: #efefef;
	}

	.dfoot .btn {
		width: 66px;
		height: 21px;
		border-color: #0067c0;
	}
</style>
